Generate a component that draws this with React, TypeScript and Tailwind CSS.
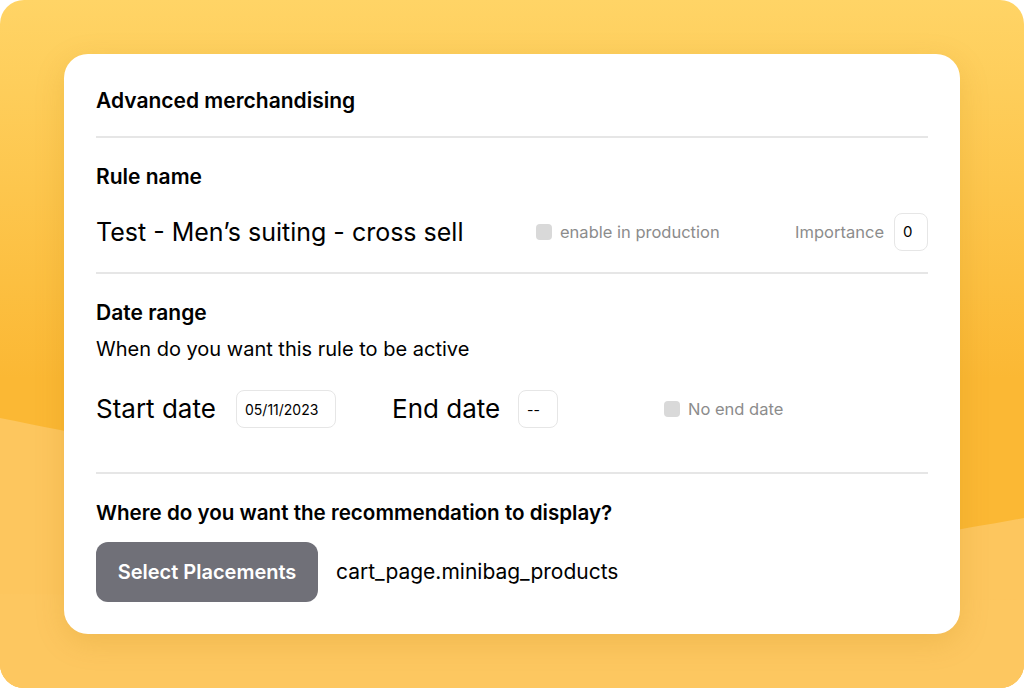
import { useState } from "react"

const font = { fontFamily: "Inter, 'Open Sans', sans-serif" }

function Divider({ className = "" }: { className?: string }) {
  return <div className={`h-[2px] w-full bg-[#e6e6e6] ${className}`} />
}

function Check({ label }: { label: string }) {
  return (
    <label className="flex items-center gap-2 text-[16.5px] text-[#8c8c8c]">
      <span className="h-4 w-4 rounded-[4px] bg-[#d9d9d9]" />
      {label}
    </label>
  )
}

export default function App() {
  const [ruleName] = useState("Test - Men’s suiting - cross sell")

  return (
    <div className="relative h-[688px] w-[1024px] overflow-hidden rounded-3xl bg-white" style={font}>
      <svg className="absolute inset-0" width="1024" height="688" viewBox="0 0 1024 688">
        <defs>
          <linearGradient id="bg" x1="0" y1="0" x2="0" y2="1">
            <stop offset="0" stopColor="#ffd466" />
            <stop offset="0.55" stopColor="#fbb834" />
            <stop offset="1" stopColor="#fbb834" />
          </linearGradient>
        </defs>
        <rect width="1024" height="688" fill="url(#bg)" />
        <path d="M0 418 C 40 426, 90 436, 160 450 L 800 560 C 880 542, 960 530, 1024 518 L1024 688 L0 688 Z" fill="#fdc65e" />
        <path d="M0 594 L1024 600 L1024 688 L0 688 Z" fill="#fec862" opacity="0.6" />
      </svg>

      <div className="relative px-16 py-[54px]">
        <div className="flex h-[580px] flex-col rounded-3xl bg-white px-8 pt-[33px] shadow-[0_8px_30px_rgba(180,120,0,0.18)]">
          <h1 className="text-[21px] font-semibold leading-7 text-black">Advanced merchandising</h1>
          <Divider className="mt-[21px]" />

          <h2 className="mt-[25px] text-[21px] font-semibold leading-7 text-black">Rule name</h2>
          <div className="mt-[22px] flex h-[38px] items-center">
            <span className="w-[440px] text-[25px] leading-none text-black">{ruleName}</span>
            <Check label="enable in production" />
            <span className="ml-auto mr-[10px] text-[16.5px] text-[#8c8c8c]">Importance</span>
            <div className="flex h-[38px] w-[34px] items-center rounded-lg border border-[#e6e6e6] pl-2 text-[15px] text-black">0</div>
          </div>
          <Divider className="mt-[21px]" />

          <h2 className="mt-[25px] text-[21px] font-semibold leading-7 text-black">Date range</h2>
          <p className="mt-2 text-[20px] leading-7 text-black">When do you want this rule to be active</p>
          <div className="mt-[27px] flex h-[38px] items-center">
            <span className="w-[140px] text-[26px] leading-none text-black">Start date</span>
            <div className="flex h-[38px] w-[100px] items-center rounded-lg border border-[#e6e6e6] pl-2 text-[14px] text-black">05/11/2023</div>
            <span className="ml-14 w-[126px] text-[26px] leading-none text-black">End date</span>
            <div className="flex h-[38px] w-[40px] items-center rounded-lg border border-[#e6e6e6] pl-2 text-[14px] text-black">--</div>
            <div className="ml-[106px]">
              <Check label="No end date" />
            </div>
          </div>
          <Divider className="mt-[44px]" />

          <h2 className="mt-[25px] text-[20.6px] font-semibold leading-7 text-black">Where do you want the recommendation to display?</h2>
          <div className="mt-[15px] flex items-center gap-[18px]">
            <button className="h-[60px] w-[222px] rounded-xl bg-[#707078] text-[20px] font-semibold text-white">Select Placements</button>
            <span className="text-[21px] text-black">cart_page.minibag_products</span>
          </div>
        </div>
      </div>
    </div>
  )
}
